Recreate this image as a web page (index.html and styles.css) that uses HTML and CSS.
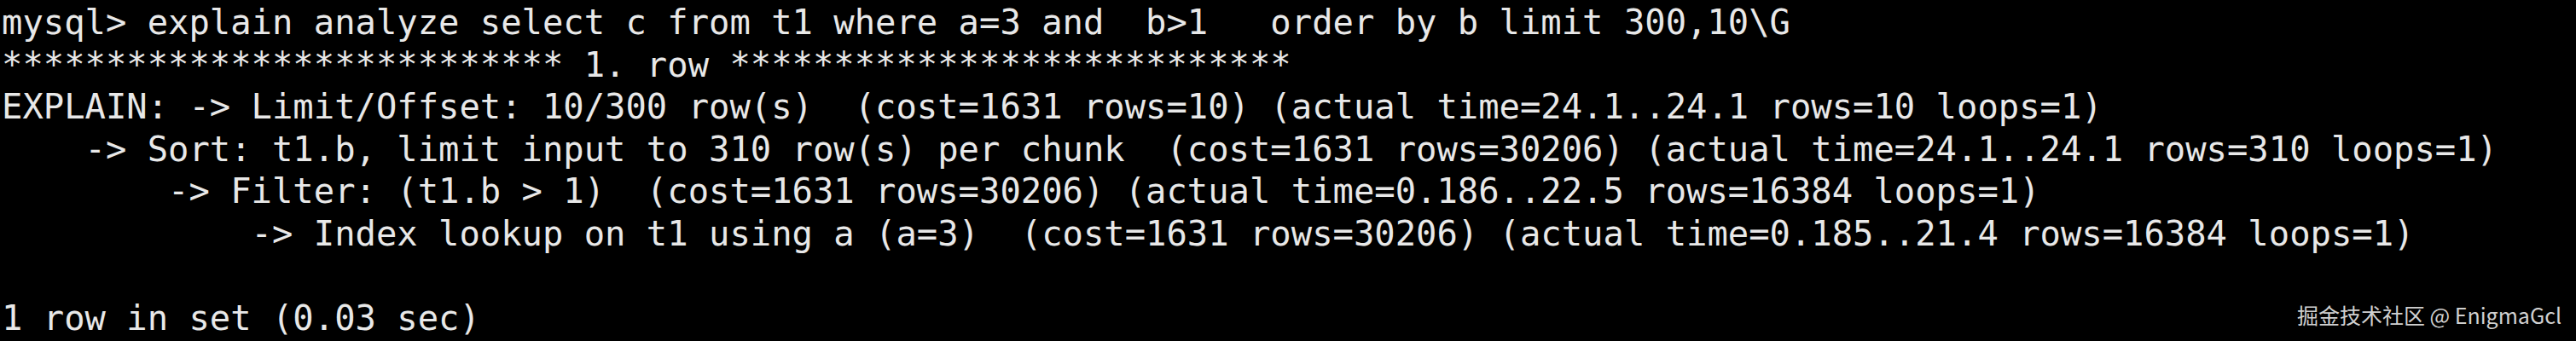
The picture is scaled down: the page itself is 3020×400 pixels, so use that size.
FILE: index.html
```html
<!DOCTYPE html>
<html lang="zh-CN">
<head>
<meta charset="utf-8">
<title>mysql explain analyze</title>
<link rel="stylesheet" href="styles.css">
</head>
<body>
<main class="terminal">
<div class="output">
<div class="line">mysql&gt; explain analyze select c from t1 where a=3 and  b&gt;1   order by b limit 300,10\G</div>
<div class="line">*************************** 1. row ***************************</div>
<div class="line">EXPLAIN: -&gt; Limit/Offset: 10/300 row(s)  (cost=1631 rows=10) (actual time=24.1..24.1 rows=10 loops=1)</div>
<div class="line">    -&gt; Sort: t1.b, limit input to 310 row(s) per chunk  (cost=1631 rows=30206) (actual time=24.1..24.1 rows=310 loops=1)</div>
<div class="line">        -&gt; Filter: (t1.b &gt; 1)  (cost=1631 rows=30206) (actual time=0.186..22.5 rows=16384 loops=1)</div>
<div class="line">            -&gt; Index lookup on t1 using a (a=3)  (cost=1631 rows=30206) (actual time=0.185..21.4 rows=16384 loops=1)</div>
<div class="line blank"></div>
<div class="line">1 row in set (0.03 sec)</div>
</div>
<div class="watermark">掘金技术社区 @ EnigmaGcl</div>
</main>
</body>
</html>
```

FILE: styles.css
```css
html, body {
  margin: 0;
  padding: 0;
  background: #000;
}

.terminal {
  position: relative;
  width: 3020px;
  height: 400px;
  overflow: hidden;
  background: #000;
}

.output {
  display: flex;
  flex-direction: column;
  align-items: flex-start;
  margin: 2px 0 0 0;
  padding: 0 0 0 2px;
  font-family: "DejaVu Sans Mono", "Liberation Mono", monospace;
  font-size: 40.5px;
  line-height: 49.5px;
  color: #e8e8e8;
}

.line {
  white-space: pre;
}

.blank {
  height: 49.5px;
}

.watermark {
  position: absolute;
  right: 17px;
  bottom: 16px;
  font-family: "Noto Sans CJK SC", "Noto Sans", sans-serif;
  font-size: 25px;
  line-height: 30px;
  color: #d0d0d0;
  white-space: nowrap;
}
```
